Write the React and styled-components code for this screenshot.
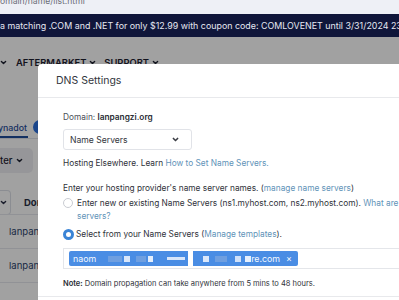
import React from 'react';
import styled, { createGlobalStyle } from 'styled-components';

const GlobalStyle = createGlobalStyle`
    html, body {
        margin: 0;
        padding: 0;
    }
    body {
        font-family: Inter, "Noto Sans", "Liberation Sans", sans-serif;
        background: #ffffff;
        -webkit-font-smoothing: antialiased;
    }
`;

const Screen = styled.div`
    position: relative;
    width: 399px;
    height: 300px;
    overflow: hidden;
    display: flex;
    flex-direction: column;
    background: #ffffff;
`;

const AddressBar = styled.div`
    height: 14px;
    flex-shrink: 0;
    overflow: hidden;
    background: #eef0f6;
    color: #6b6e78;
    font-size: 8.6px;
    line-height: 9px;

    & span {
        display: block;
        margin-top: -3px;
    }
`;

const Banner = styled.div`
    height: 23px;
    flex-shrink: 0;
    background: #10163a;
    color: #e6e8f2;
    font-size: 8.9px;
    line-height: 23px;
    white-space: nowrap;
    overflow: hidden;
`;

const PageBody = styled.div`
    position: relative;
    flex: 1;
    display: flex;
    flex-direction: column;
`;

const Nav = styled.div`
    display: flex;
    align-items: center;
    gap: 8px;
    padding-top: 20px;
    height: 10px;
    font-size: 9.4px;
    font-weight: 600;
    color: #1d2030;
`;

const NavItem = styled.span`
    display: flex;
    align-items: center;
    gap: 3px;
    margin-left: ${(p) => p.offset || 0}px;
`;

const Tabs = styled.div`
    margin-top: 49px;
    height: 22px;
    display: flex;
    align-items: center;
    gap: 5px;
    border-bottom: 1px solid #dfe2ea;
`;

const Tab = styled.span`
    height: 100%;
    display: flex;
    align-items: center;
    font-size: 8.8px;
    font-weight: 500;
    color: #1f4c9a;
    margin-left: -2px;
    padding-right: 1px;
    box-shadow: inset 0 -2px 0 #1f4c9a;
`;

const Badge = styled.span`
    width: 16px;
    height: 14px;
    border-radius: 7px;
    background: #2b6fdc;
`;

const FilterRow = styled.div`
    margin-top: 9px;
    display: flex;
`;

const FilterButton = styled.div`
    width: 33px;
    height: 25px;
    border-radius: 0 5px 5px 0;
    background: #eeeef2;
    display: flex;
    align-items: center;
    gap: 4px;
    font-size: 9.5px;
    font-weight: 500;
    color: #1d2030;
    box-sizing: border-box;
`;

const HeaderRow = styled.div`
    margin-top: 18px;
    height: 23px;
    display: flex;
    align-items: center;
    gap: 13px;
`;

const SortBox = styled.div`
    width: 10px;
    height: 23px;
    border: 1px solid #dde0e8;
    border-left: none;
    border-radius: 0 4px 4px 0;
    display: flex;
    align-items: center;
`;

const HeaderLabel = styled.span`
    font-size: 9.5px;
    font-weight: 700;
    color: #2a2f45;
`;

const Row = styled.div`
    height: 33px;
    display: flex;
    align-items: center;
    padding-left: 9px;
    border-top: 1px solid #e6e8ee;
    font-size: 9.5px;
    color: #2a3f6a;

    &:first-of-type {
        margin-top: 8px;
    }
`;

const Overlay = styled.div`
    position: absolute;
    inset: 0;
    background: rgba(0, 0, 0, 0.37);
`;

const Modal = styled.div`
    position: absolute;
    left: 38px;
    top: 27px;
    width: 390px;
    height: 260px;
    background: #ffffff;
    border-radius: 4px 0 0 0;
    display: flex;
    flex-direction: column;
`;

const ModalHeader = styled.div`
    height: 33px;
    display: flex;
    align-items: center;
    padding-left: 18px;
    border-bottom: 1px solid #e8e9ec;
    font-size: 10.5px;
    color: #33363d;
`;

const ModalBody = styled.div`
    padding: 13px 0 6px 25px;
    display: flex;
    flex-direction: column;
    font-size: 8.3px;
    color: #2f3239;
    border-bottom: 1px solid #e8e9ec;
`;

const Line = styled.div`
    line-height: 12px;
    margin-top: ${(p) => p.mt || 0}px;
    white-space: nowrap;
    font-size: ${(p) => p.size || 8.3}px;
`;

const Muted = styled.span`
    color: #4c5058;
`;

const Strong = styled.span`
    font-weight: 600;
    color: #2a2d34;
`;

const Link = styled.span`
    color: #5f93b8;
`;

const Select = styled.div`
    margin-top: 6px;
    width: 129px;
    height: 21px;
    box-sizing: border-box;
    border: 1px solid #e1e3e8;
    border-radius: 3px;
    display: flex;
    align-items: center;
    justify-content: space-between;
    padding: 0 12px 0 6px;
    color: #33363d;
    font-size: 8.6px;
`;

const RadioRow = styled.div`
    display: flex;
    align-items: flex-start;
    gap: ${(p) => (p.checked ? 2 : 4)}px;
    margin-top: ${(p) => p.mt || 0}px;
    line-height: 13px;
    white-space: nowrap;
`;

const Radio = styled.span`
    flex-shrink: 0;
    width: ${(p) => (p.checked ? 11 : 10)}px;
    height: ${(p) => (p.checked ? 11 : 10)}px;
    margin-top: 1px;
    box-sizing: border-box;
    border-radius: 50%;
    border: ${(p) => (p.checked ? '3px solid #3a84d6' : '1px solid #c9ccd2')};
    background: #ffffff;
`;

const TagInput = styled.div`
    margin-top: 7px;
    height: 21px;
    box-sizing: border-box;
    border: 1px solid #e4e6ea;
    border-right: none;
    display: flex;
    align-items: center;
    padding-left: 5px;
`;

const Tag = styled.div`
    height: 15px;
    width: 229px;
    border-radius: 2px;
    background: #4a8de4;
    display: flex;
    align-items: center;
    color: #f4f8ff;
    font-size: 8.8px;
    padding: 0 6px 0 4px;
    box-sizing: border-box;
`;

const TagEnd = styled.span`
    margin-left: auto;
`;

const Blot = styled.span`
    width: ${(p) => p.w}px;
    height: ${(p) => p.h || 6}px;
    margin-left: ${(p) => p.gap}px;
    background: ${(p) => p.color};
    flex-shrink: 0;
`;

const Close = styled.span`
    margin-left: 6px;
    font-size: 9px;
`;

function Chevron({ size = 6, color = 'currentColor', width = 1.4 }) {
    return (
        <svg width={size} height={size} viewBox='0 0 10 10' fill='none'>
            <path d='M2 3.5 L5 6.5 L8 3.5' stroke={color} strokeWidth={width * 10 / size} strokeLinecap='round' strokeLinejoin='round' />
        </svg>
    );
}

// the censored bits on the name server tag
const blots = [
    { w: 14, gap: 12, color: '#6f9fe0' },
    { w: 6, gap: 2, color: '#d8e6fa' },
    { w: 10, gap: 6, color: '#6f9fe0' },
    { w: 5, gap: 2, color: '#e4eefc' },
    { w: 18, gap: 14, color: '#d8e6fa', h: 3 },
    { w: 5, gap: 3, color: '#ffffff', h: 15 },
    { w: 6, gap: 10, color: '#dbe8fb' },
    { w: 12, gap: 6, color: '#6f9fe0' },
    { w: 6, gap: 8, color: '#d0e1f9' },
    { w: 6, gap: 4, color: '#e7f0fd' }
];

export default function App() {
    return (
        <>
            <GlobalStyle />
            <Screen>
                <AddressBar><span>omain/name/list.html</span></AddressBar>
                <Banner>a matching .COM and .NET for only $12.99 with coupon code: COMLOVENET until 3/31/2024 23:59 PST</Banner>
                <PageBody>
                    <Nav>
                        <NavItem><Chevron size={7} /></NavItem>
                        <NavItem offset={1}>AFTERMARKET <Chevron size={7} /></NavItem>
                        <NavItem>SUPPORT <Chevron size={7} /></NavItem>
                    </Nav>
                    <Tabs>
                        <Tab>ynadot</Tab>
                        <Badge />
                    </Tabs>
                    <FilterRow>
                        <FilterButton>ter <Chevron size={7} /></FilterButton>
                    </FilterRow>
                    <HeaderRow>
                        <SortBox><Chevron size={7} color='#2a2f45' /></SortBox>
                        <HeaderLabel>Domain</HeaderLabel>
                    </HeaderRow>
                    <Row>lanpangzi.org</Row>
                    <Row>lanpangzi.com</Row>
                    <Row />
                    <Overlay />
                    <Modal>
                        <ModalHeader>DNS Settings</ModalHeader>
                        <ModalBody>
                            <Line><Muted>Domain: </Muted><Strong>lanpangzi.org</Strong></Line>
                            <Select>
                                <span>Name Servers</span>
                                <Chevron size={7} color='#3a3d44' width={1.6} />
                            </Select>
                            <Line mt={7}>Hosting Elsewhere. Learn <Link>How to Set Name Servers.</Link></Line>
                            <Line mt={13}>Enter your hosting provider's name server names. (<Link>manage name servers</Link>)</Line>
                            <RadioRow mt={3}>
                                <Radio />
                                <span>
                                    Enter new or existing Name Servers (ns1.myhost.com, ns2.myhost.com). <Link>What are name</Link>
                                    <br />
                                    <Link>servers?</Link>
                                </span>
                            </RadioRow>
                            <RadioRow mt={5} checked>
                                <Radio checked />
                                <span>Select from your Name Servers (<Link>Manage templates</Link>).</span>
                            </RadioRow>
                            <TagInput>
                                <Tag>
                                    naom
                                    {blots.map((b, i) => (
                                        <Blot key={i} {...b} />
                                    ))}
                                    <TagEnd>re.com</TagEnd>
                                    <Close>×</Close>
                                </Tag>
                            </TagInput>
                            <Line mt={9} size={7.5}><Strong>Note:</Strong> Domain propagation can take anywhere from 5 mins to 48 hours.</Line>
                        </ModalBody>
                    </Modal>
                </PageBody>
            </Screen>
        </>
    );
}
